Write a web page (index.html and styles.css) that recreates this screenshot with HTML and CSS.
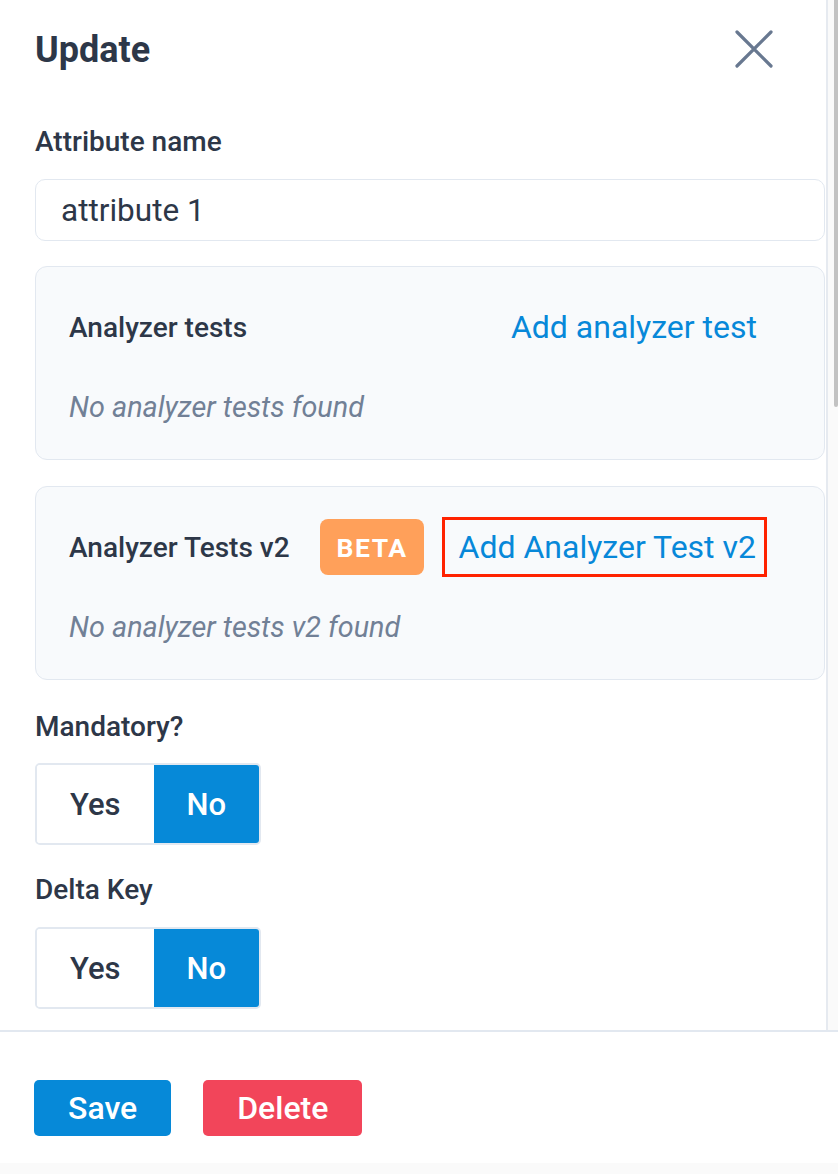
FILE: index.html
```html
<!DOCTYPE html>
<html lang="en">
<head>
<meta charset="utf-8">
<title>Update attribute</title>
<link rel="stylesheet" href="styles.css">
</head>
<body>
<div class="drawer">
  <div class="main">
    <div class="content">
      <div class="header">
        <h1 class="title">Update</h1>
        <svg class="close" width="38" height="38" viewBox="0 0 38 38" aria-label="Close">
          <path d="M2 2 L36 36 M36 2 L2 36" stroke="#687890" stroke-width="3.2" stroke-linecap="round" fill="none"/>
        </svg>
      </div>

      <label class="label label-first">Attribute name</label>
      <div class="input">attribute 1</div>

      <div class="card card-first">
        <div class="card-head">
          <span class="card-title">Analyzer tests</span>
          <a class="link">Add analyzer test</a>
        </div>
        <div class="empty">No analyzer tests found</div>
      </div>

      <div class="card">
        <div class="card-head">
          <div class="head-left">
            <span class="card-title">Analyzer Tests v2</span>
            <span class="badge">BETA</span>
          </div>
          <a class="link link-marked">Add Analyzer Test v2</a>
        </div>
        <div class="empty">No analyzer tests v2 found</div>
      </div>

      <label class="label label-gap">Mandatory?</label>
      <div class="toggle">
        <span class="seg">Yes</span>
        <span class="seg seg-on">No</span>
      </div>

      <label class="label label-gap2">Delta Key</label>
      <div class="toggle">
        <span class="seg">Yes</span>
        <span class="seg seg-on">No</span>
      </div>
    </div>
    <div class="track"><div class="thumb"></div></div>
  </div>
  <div class="footer">
    <button class="btn btn-save">Save</button>
    <button class="btn btn-delete">Delete</button>
  </div>
  <div class="bottom"></div>
</div>
</body>
</html>
```

FILE: styles.css
```css
* { box-sizing: border-box; }
html, body { margin: 0; padding: 0; }
body {
  font-family: Roboto, "Liberation Sans", Arial, sans-serif;
  color: #2d3748;
  background: #ffffff;
  width: 838px;
  height: 1174px;
  overflow: hidden;
}
.drawer { display: flex; flex-direction: column; height: 1174px; }
.main { display: flex; height: 1030px; overflow: hidden; }
.content {
  width: 828px;
  padding: 30px 1px 0 35px;
  border-right: 2px solid #e6eaf0;
  overflow: hidden;
}
.track { flex: 1; background: #fafafa; padding-left: 6px; }
.thumb { height: 407px; background: #c2c2c2; border-radius: 0 0 3px 3px; }

.header { display: flex; align-items: center; justify-content: space-between; height: 40px; }
.title { margin: 0; font-size: 36px; font-weight: 700; line-height: 40px; color: #2d3748; }
.close { margin-right: 52px; margin-top: -2px; }

.label { display: block; font-size: 28px; font-weight: 500; line-height: 32px; color: #2d3748; }
.label-first { margin-top: 56px; }
.label-gap { margin-top: 31px; }
.label-gap2 { margin-top: 29px; }

.input {
  margin-top: 21px;
  height: 62px;
  border: 1.5px solid #e2e8f0;
  border-radius: 10px;
  padding: 0 25px;
  display: flex;
  align-items: center;
  font-size: 31.5px;
  color: #2d3748;
}

.card {
  margin-top: 26px;
  height: 194px;
  background: #f8fafc;
  border: 1.5px solid #e2e8f0;
  border-radius: 12px;
  padding: 30px 57px 0 33px;
}
.card-first { margin-top: 25px; }
.card-head { display: flex; align-items: center; justify-content: space-between; height: 60px; }
.head-left { display: flex; align-items: center; }
.card-title { font-size: 28px; font-weight: 500; color: #2d3748; }
.badge {
  margin-left: 30px;
  height: 56px;
  padding: 0 16px 0 17px;
  background: #ffa05a;
  color: #ffffff;
  border-radius: 8px;
  font-size: 26.5px;
  font-weight: 700;
  letter-spacing: 1.5px;
  display: flex;
  align-items: center;
}
.link { font-size: 32px; color: #0788d9; padding: 0 10px; text-decoration: none; }
.link-marked {
  border: 3px solid #ff2200;
  height: 60px;
  display: flex;
  align-items: center;
  padding: 0 8px 0 14px;
}
.empty { margin-top: 34px; font-size: 28.8px; line-height: 32px; font-style: italic; color: #718096; }

.toggle {
  margin-top: 20px;
  display: inline-flex;
  height: 82px;
  border: 2px solid #e2e8f0;
  border-radius: 5px;
  overflow: hidden;
}
.label-gap2 + .toggle { margin-top: 21px; }
.seg {
  display: flex;
  align-items: center;
  padding: 0 33px;
  font-size: 31px;
  font-weight: 500;
  color: #2d3748;
  background: #ffffff;
}
.seg-on { background: #0689d8; color: #ffffff; padding: 0 33px 0 33px; }

.footer {
  height: 133px;
  border-top: 2px solid #e2e8f0;
  padding: 48px 0 0 34px;
  display: flex;
  gap: 32px;
  align-items: flex-start;
}
.btn {
  height: 56px;
  border: none;
  border-radius: 5px;
  color: #ffffff;
  font-family: Roboto, "Liberation Sans", Arial, sans-serif;
  font-size: 32px;
  font-weight: 500;
  padding: 0 34px;
}
.btn-save { background: #0689d8; }
.btn-delete { background: #f2455a; padding: 0 34px; }
.bottom { flex: 1; background: #fafafa; }
```
